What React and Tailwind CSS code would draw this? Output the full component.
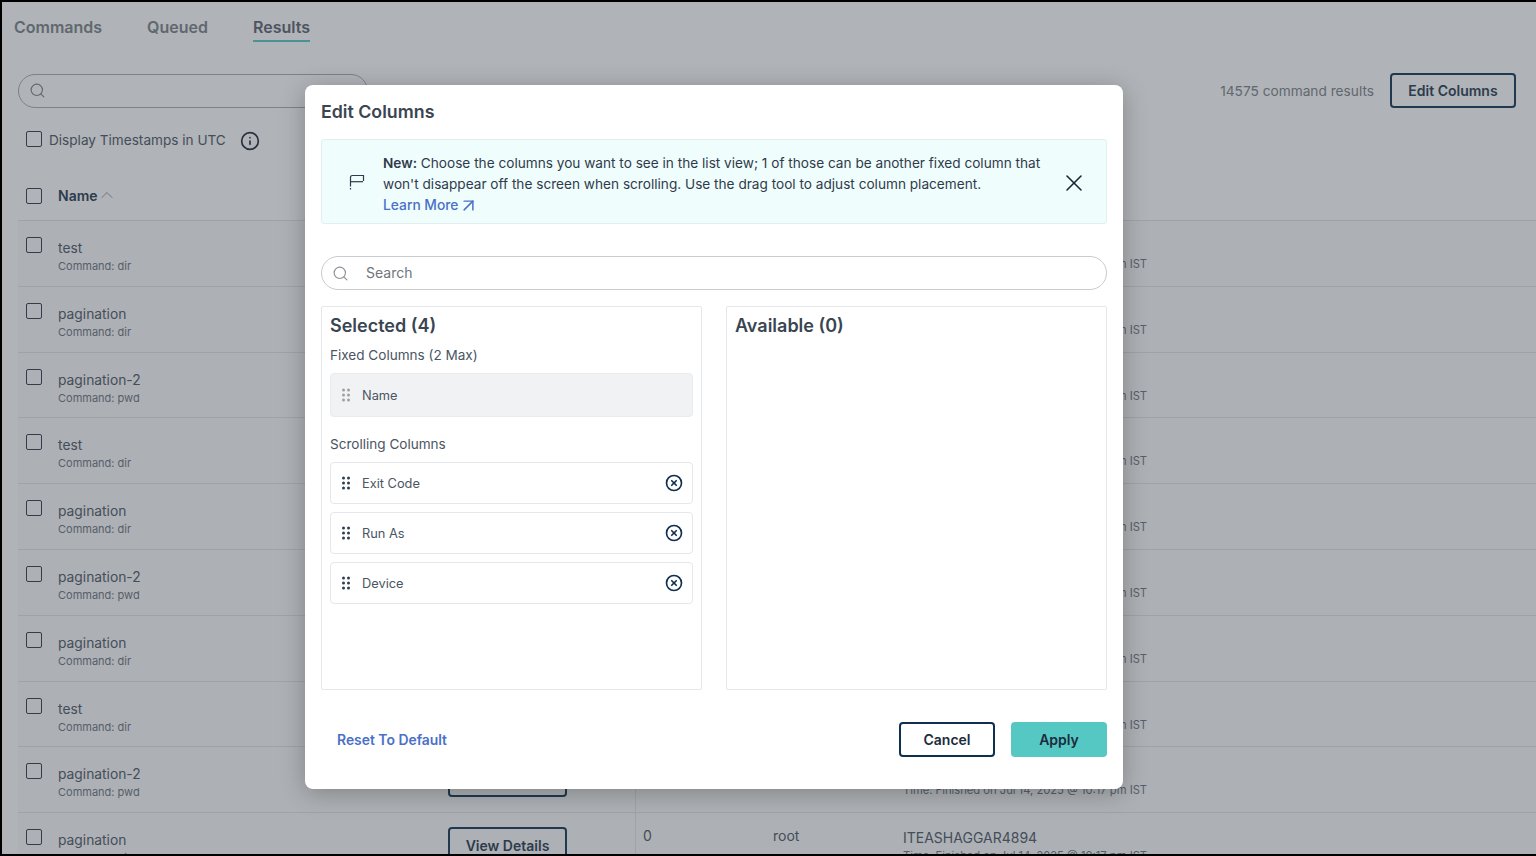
import { ChevronUp, Info, Search, X, CircleX, ArrowUpRight } from "lucide-react";

const rows = [
  ["test", "dir"],
  ["pagination", "dir"],
  ["pagination-2", "pwd"],
  ["test", "dir"],
  ["pagination", "dir"],
  ["pagination-2", "pwd"],
  ["pagination", "dir"],
  ["test", "dir"],
  ["pagination-2", "pwd"],
  ["pagination", "dir"],
];

function Check() {
  return <div className="w-4 h-4 shrink-0 rounded-[2px] border-[1.5px] border-[#2f3a4a] bg-white/20" />;
}

function Grip({ light }) {
  return (
    <svg width="8" height="14" viewBox="0 0 8 14" className={light ? "fill-[#9aa1a9]" : "fill-[#2f3f50]"}>
      <circle cx="1.5" cy="2" r="1.5" />
      <circle cx="6.5" cy="2" r="1.5" />
      <circle cx="1.5" cy="7" r="1.5" />
      <circle cx="6.5" cy="7" r="1.5" />
      <circle cx="1.5" cy="12" r="1.5" />
      <circle cx="6.5" cy="12" r="1.5" />
    </svg>
  );
}

function ColumnItem({ name }) {
  return (
    <div className="h-[42px] flex items-center border border-[#e5e7eb] rounded-[4px] pl-[11px] pr-[9px]">
      <Grip />
      <span className="ml-[12px] pt-[2px] text-[12.8px] text-[#4b5563]">{name}</span>
      <CircleX size={18} strokeWidth={2.2} className="ml-auto text-[#0f2f4f]" />
    </div>
  );
}

function ResultRow({ name, cmd }) {
  return (
    <div className="h-[65.8px] flex border-b border-[#dfe5e6] bg-[#fafbfb] overflow-hidden">
      <div className="w-[618px] shrink-0 flex border-r border-[#dfe5e6] pl-2">
        <div className="mt-[16px]"><Check /></div>
        <div className="w-[390px] ml-4 pt-[17px]">
          <div className="text-[13.8px] leading-[20px] text-[#4b5563]">{name}</div>
          <div className="text-[11px] leading-[16px] text-[#6b7280]">Command: {cmd}</div>
        </div>
        <button className="mt-[14px] w-[119px] h-[36px] border-2 border-[#0f3554] rounded-[4px] text-[14px] font-semibold text-[#26384d]">
          View Details
        </button>
      </div>
      <div className="w-[137px] pl-[7px] pt-[12px] text-[14px] text-[#4b5563]">0</div>
      <div className="w-[130px] pt-[12px] text-[14px] text-[#4b5563]">root</div>
      <div className="pt-[15px]">
        <div className="text-[14px] leading-[20px] text-[#4b5563]">ITEASHAGGAR4894</div>
        <div className="text-[11.2px] leading-[16px] text-[#6b7280]">Time: Finished on Jul 14, 2025 @ 10:17 pm IST</div>
      </div>
    </div>
  );
}

export default function App() {
  return (
    <div className="relative w-[1536px] h-[856px] overflow-hidden bg-white border-y-2 border-l-2 border-black font-['Inter',sans-serif]">
      {/* page behind the dialog */}
      <div className="flex gap-[45px] pl-3 pt-[14px] h-[71px]">
        <div className="h-[26px] text-[16px] leading-[22px] font-semibold text-[#7b8288]">Commands</div>
        <div className="h-[26px] text-[16px] leading-[22px] font-semibold text-[#7b8288]">Queued</div>
        <div className="h-[26px] text-[16px] leading-[22px] font-semibold text-[#5b636e] border-b-2 border-[#56c8c3]">Results</div>
      </div>
      <div className="flex items-center pl-4 pr-[20px]">
        <div className="w-[350px] h-[34px] rounded-full border border-[#a9adb3] flex items-center pl-[10px]">
          <Search size={17} strokeWidth={1.6} className="text-[#7b8288]" />
        </div>
        <span className="ml-auto pt-[2px] text-[13.7px] text-[#7b8288]">14575 command results</span>
        <button className="ml-4 w-[126px] h-[35px] border-2 border-[#0f3554] rounded-[4px] text-[14px] font-semibold text-[#26384d]">
          Edit Columns
        </button>
      </div>
      <div className="flex items-center pl-6 mt-[23px] h-[16px]">
        <Check />
        <span className="ml-[7px] pt-[2px] text-[13.6px] text-[#4b5563]">Display Timestamps in UTC</span>
        <Info size={20} className="ml-[14px] mt-[4px] text-[#1c2633]" />
      </div>
      <div className="ml-4 mt-[24px] h-[50px] flex items-start border-b border-[#dfe5e6] pl-2">
        <div className="mt-[17px]"><Check /></div>
        <span className="ml-4 mt-[15px] text-[14px] leading-[20px] font-semibold text-[#26384d]">Name</span>
        <ChevronUp size={20} strokeWidth={1} className="mt-[14px] -ml-[1px] text-[#7b8288]" />
      </div>
      <div className="ml-4">
        {rows.map((r, i) => (
          <ResultRow key={i} name={r[0]} cmd={r[1]} />
        ))}
      </div>

      {/* dim overlay */}
      <div className="absolute inset-0 bg-[#39414b]/40" />

      {/* dialog */}
      <div className="absolute left-[303px] top-[83px] w-[818px] h-[704px] bg-white rounded-[8px] shadow-[0_4px_24px_rgba(0,0,0,0.25)] px-4 pt-[14px] flex flex-col">
        <h2 className="text-[17.8px] leading-[26px] font-semibold text-[#3a4552]">Edit Columns</h2>

        <div className="mt-[14px] h-[85px] shrink-0 flex items-center bg-[#f0fdfd] border border-[#e3eeee] rounded-[3px] pl-[27px]">
          <svg width="16" height="17" viewBox="0 0 16 17" fill="none" stroke="#2f3a4a" strokeWidth="1.2" className="shrink-0 mt-[2px]">
            <path d="M1.5 12.5V3.5Q1.5 1.5 3.5 1.5H14.5V7" />
            <path d="M2 7.7H14" />
            <path d="M1.5 14V15.5" />
          </svg>
          <div className="ml-[18px] mt-[6px] w-[670px] text-[13.63px] leading-[21px] text-[#2f3a4a] whitespace-nowrap">
            <div><b className="font-semibold">New:</b> Choose the columns you want to see in the list view; 1 of those can be another fixed column that</div>
            <div>won't disappear off the screen when scrolling. Use the drag tool to adjust column placement.</div>
            <div className="flex items-center text-[13.8px] font-medium text-[#4a70c8]">
              Learn More <ArrowUpRight size={21} strokeWidth={1.7} className="-my-1" />
            </div>
          </div>
          <X size={28} strokeWidth={1.3} className="ml-auto mt-[2px] mr-[18px] text-[#1c2633]" />
        </div>

        <div className="mt-[32px] h-[34px] shrink-0 rounded-full border border-[#c9cbce] flex items-center pl-[10px]">
          <Search size={17} strokeWidth={1.6} className="text-[#8b9096]" />
          <span className="ml-[17px] -mt-[2px] text-[14px] text-[#6f757c]">Search</span>
        </div>

        <div className="mt-4 h-[384px] shrink-0 flex gap-6">
          <div className="flex-1 border border-[#e5e7eb] rounded-[2px] px-2 pt-[6px]">
            <h3 className="text-[18px] leading-[26px] font-semibold text-[#3a4552]">Selected (4)</h3>
            <div className="mt-[6px] text-[13.55px] leading-[20px] text-[#4b5563]">Fixed Columns (2 Max)</div>
            <div className="mt-2 h-[44px] flex items-center bg-[#f1f2f4] border border-[#e9ebee] rounded-[4px] pl-[11px]">
              <Grip light />
              <span className="ml-[12px] pt-[2px] text-[12.8px] text-[#4b5563]">Name</span>
            </div>
            <div className="mt-[17px] text-[13.55px] leading-[20px] text-[#4b5563]">Scrolling Columns</div>
            <div className="mt-2 flex flex-col gap-2">
              <ColumnItem name="Exit Code" />
              <ColumnItem name="Run As" />
              <ColumnItem name="Device" />
            </div>
          </div>
          <div className="flex-1 border border-[#e5e7eb] rounded-[2px] px-2 pt-[6px]">
            <h3 className="text-[18px] leading-[26px] font-semibold text-[#3a4552]">Available (0)</h3>
          </div>
        </div>

        <div className="mt-8 flex items-center pl-4">
          <span className="pt-[2px] text-[13.9px] font-semibold text-[#4a70c8]">Reset To Default</span>
          <button className="ml-auto w-[96px] h-[35px] border-2 border-[#0f2f4f] rounded-[4px] text-[14px] font-semibold text-[#1c2b3d]">
            Cancel
          </button>
          <button className="ml-4 w-[96px] h-[35px] bg-[#56c8c3] rounded-[4px] text-[14px] font-semibold text-[#1c2b3d]">
            Apply
          </button>
        </div>
      </div>
    </div>
  );
}
